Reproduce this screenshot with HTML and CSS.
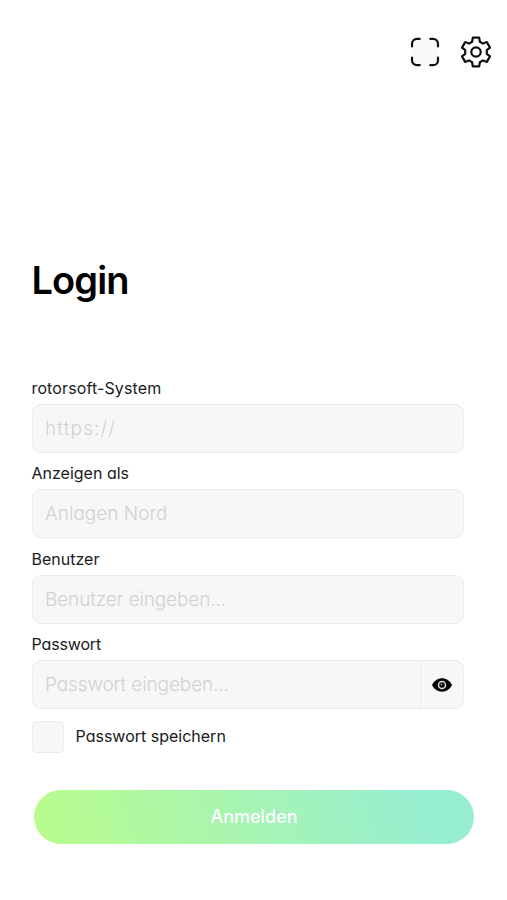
FILE: index.html
```html
<!DOCTYPE html>
<html lang="de">
<head>
    <meta charset="UTF-8">
    <meta name="viewport" content="width=device-width, initial-scale=1.0">
    <title>Login</title>
    <link rel="stylesheet" href="styles.css">
</head>
<body>
    <header class="topbar">
        <button class="icon-button" title="Vollbild">
            <svg width="30" height="30" viewBox="0 0 30 30" fill="none" stroke="#111" stroke-width="2.2" stroke-linecap="round">
                <rect x="2" y="2" width="26" height="26" rx="5" fill="#f9f9f9" stroke="none"/>
                <path d="M2 9.500V6.800a5 5 0 0 1 5-5h2.700M20.300 1.800h2.700a5 5 0 0 1 5 5v2.700M28 20.500v2.700a5 5 0 0 1-5 5h-2.700M9.700 28.200H7a5 5 0 0 1-5-5v-2.700"/>
            </svg>
        </button>
        <button class="icon-button" title="Einstellungen">
            <svg width="32" height="32" viewBox="0 0 32 32" fill="none" stroke="#111" stroke-width="2.2" stroke-linejoin="round">
                <path d="M12.800 1.700H19.200L19.900 5.700L23 7.600L26.800 6.100L30 11.600L26.800 14.200V17.800L30 20.400L26.800 25.900L23 24.400L19.900 26.300L19.200 30.300H12.800L12.100 26.300L9 24.400L5.200 25.900L2 20.400L5.200 17.800V14.200L2 11.600L5.200 6.100L9 7.600L12.100 5.700Z"/>
                <circle cx="16" cy="16" r="4.7"/>
            </svg>
        </button>
    </header>

    <main class="login">
        <h1 class="title">Login</h1>
        <form class="login-form">
            <div class="field">
                <label class="label label-system" for="system">rotorsoft-System</label>
                <input class="input input-system" type="text" id="system" placeholder="https://">
            </div>
            <div class="field">
                <label class="label" for="display">Anzeigen als</label>
                <input class="input" type="text" id="display" placeholder="Anlagen Nord">
            </div>
            <div class="field">
                <label class="label" for="user">Benutzer</label>
                <input class="input input-user" type="text" id="user" placeholder="Benutzer eingeben...">
            </div>
            <div class="field">
                <label class="label label-password" for="password">Passwort</label>
                <div class="input-group">
                    <input class="input input-password" type="password" id="password" placeholder="Passwort eingeben...">
                    <button class="toggle" type="button" title="Passwort anzeigen">
                        <svg width="20" height="14" viewBox="0 0 20 14">
                            <path d="M0 7C2.2 2.6 5.800 0.300 10 0.300S17.800 2.600 20 7C17.800 11.400 14.200 13.700 10 13.700S2.200 11.400 0 7z" fill="#000"/>
                            <circle cx="10" cy="7" r="3.500" fill="#000" stroke="#ddd" stroke-width="1.500"/>
                            <circle cx="9.500" cy="6.500" r="1" fill="#999"/>
                        </svg>
                    </button>
                </div>
            </div>
            <label class="remember">
                <input class="checkbox" type="checkbox">
                <span class="remember-text">Passwort speichern</span>
            </label>
            <button class="submit" type="button">Anmelden</button>
        </form>
    </main>
</body>
</html>
```
FILE: styles.css
```css
* {
    box-sizing: border-box;
}

body {
    margin: 0;
    height: 900px;
    overflow: hidden;
    background-color: #fff;
    color: #1a1a1a;
    font-family: Inter, "Open Sans", sans-serif;
    font-feature-settings: "cv11";
}

button, input {
    font-family: inherit;
    font-feature-settings: inherit;
}

.topbar {
    display: flex;
    justify-content: flex-end;
    align-items: center;
    gap: 20px;
    height: 104px;
    padding-right: 15px;
}

.icon-button {
    display: flex;
    padding: 0;
    border: none;
    background: none;
    cursor: pointer;
}

.login {
    padding: 151px 33px 0 31.5px;
}

.title {
    margin: 0;
    font-size: 38px;
    font-weight: 600;
    line-height: 50px;
    letter-spacing: -0.9px;
    color: #000;
}

.login-form {
    width: 442px;
    padding-top: 72.6px;
}

.field {
    width: 432.5px;
    height: 85.6px;
}

.label {
    display: block;
    height: 26px;
    font-size: 16px;
    line-height: 20px;
}

.label-system {
    letter-spacing: 0.12px;
}

.label-password {
    letter-spacing: -0.15px;
}

.input {
    display: block;
    width: 100%;
    height: 49px;
    padding: 0 12.5px;
    border: 1px solid #ebebeb;
    border-radius: 9px;
    background-color: #f7f7f7;
    font-size: 19px;
    outline: none;
}

.input::placeholder {
    color: #d0d2d2;
    font-weight: 300;
    opacity: 1;
}

.input-system::placeholder {
    letter-spacing: 1.15px;
}

.input-user::placeholder,
.input-password::placeholder {
    letter-spacing: -0.12px;
}

.input-group {
    display: flex;
}

.input-group .input {
    flex: 1;
    border-right: none;
    border-radius: 9px 0 0 9px;
}

.toggle {
    display: flex;
    justify-content: center;
    align-items: center;
    width: 44px;
    height: 49px;
    padding: 0;
    border: 1px solid #ebebeb;
    border-radius: 0 9px 9px 0;
    background-color: #f7f7f7;
    cursor: pointer;
}

.remember {
    display: flex;
    align-items: center;
    gap: 12px;
    margin-top: 1px;
    height: 32px;
    font-size: 16px;
}

.checkbox {
    appearance: none;
    width: 32px;
    height: 32px;
    margin: 0;
    border: 1px solid #ebebeb;
    border-radius: 4px;
    background-color: #f7f7f7;
}

.remember-text {
    padding-bottom: 1px;
}

.submit {
    display: block;
    width: 440px;
    height: 54px;
    margin: 37px 0 0 2.5px;
    padding: 0 0 1px;
    border: none;
    border-radius: 27px;
    background: linear-gradient(75deg, #b8fc90 5%, #a9f5ae 42%, #96edd2 90%);
    color: #fff;
    font-size: 18px;
    font-weight: 500;
    cursor: pointer;
}
```
